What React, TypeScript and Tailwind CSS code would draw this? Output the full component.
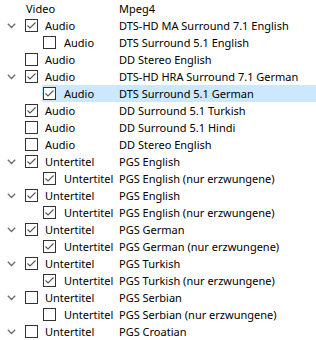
import React from "react";

type Row = {
  level: 0 | 1;
  chevron?: boolean;
  checked?: boolean;
  label: string;
  desc: string;
  selected?: boolean;
  header?: boolean;
};

const rows: Row[] = [
  { level: 0, header: true, label: "Video", desc: "Mpeg4" },
  { level: 0, chevron: true, checked: true, label: "Audio", desc: "DTS-HD MA Surround 7.1 English" },
  { level: 1, checked: false, label: "Audio", desc: "DTS Surround 5.1 English" },
  { level: 0, checked: false, label: "Audio", desc: "DD Stereo English" },
  { level: 0, chevron: true, checked: true, label: "Audio", desc: "DTS-HD HRA Surround 7.1 German" },
  { level: 1, checked: true, label: "Audio", desc: "DTS Surround 5.1 German", selected: true },
  { level: 0, checked: true, label: "Audio", desc: "DD Surround 5.1 Turkish" },
  { level: 0, checked: false, label: "Audio", desc: "DD Surround 5.1 Hindi" },
  { level: 0, checked: false, label: "Audio", desc: "DD Stereo English" },
  { level: 0, chevron: true, checked: true, label: "Untertitel", desc: "PGS English" },
  { level: 1, checked: true, label: "Untertitel", desc: "PGS English (nur erzwungene)" },
  { level: 0, chevron: true, checked: true, label: "Untertitel", desc: "PGS English" },
  { level: 1, checked: true, label: "Untertitel", desc: "PGS English (nur erzwungene)" },
  { level: 0, chevron: true, checked: true, label: "Untertitel", desc: "PGS German" },
  { level: 1, checked: true, label: "Untertitel", desc: "PGS German (nur erzwungene)" },
  { level: 0, chevron: true, checked: true, label: "Untertitel", desc: "PGS Turkish" },
  { level: 1, checked: true, label: "Untertitel", desc: "PGS Turkish (nur erzwungene)" },
  { level: 0, chevron: true, checked: false, label: "Untertitel", desc: "PGS Serbian" },
  { level: 1, checked: false, label: "Untertitel", desc: "PGS Serbian (nur erzwungene)" },
  { level: 0, chevron: true, checked: false, label: "Untertitel", desc: "PGS Croatian" },
];

function Chevron() {
  return (
    <svg width="9" height="6" viewBox="0 0 9 6" className="block">
      <path d="M0.8 0.8 L4.5 4.5 L8.2 0.8" fill="none" stroke="#6b6b6b" strokeWidth="1.3" />
    </svg>
  );
}

function Checkbox({ checked }: { checked?: boolean }) {
  return (
    <div className="w-[13px] h-[13px] border border-[#333333] bg-white flex items-center justify-center shrink-0">
      {checked && (
        <svg width="11" height="11" viewBox="0 0 11 11" className="block">
          <path d="M1.5 5.5 L4 8 L9.5 2.5" fill="none" stroke="#555555" strokeWidth="1.1" />
        </svg>
      )}
    </div>
  );
}

export default function App() {
  return (
    <div
      className="w-[316px] h-[340px] bg-white overflow-hidden text-[11px] text-black"
      style={{ fontFamily: '"Noto Sans", "Segoe UI", sans-serif' }}
    >
      {rows.map((r, i) => (
        <div key={i} className="flex h-[17px] items-center">
          {r.level === 0 ? (
            <div className="w-[25px] shrink-0 flex items-center pl-[7px]">
              {r.chevron && <Chevron />}
            </div>
          ) : (
            <div className="w-[42px] shrink-0" />
          )}
          <div
            className={
              "flex-1 h-full flex items-center " + (r.selected ? "bg-[#cce8ff]" : "")
            }
          >
            {r.level === 1 && <div className="w-[1px] shrink-0" />}
            {!r.header && <Checkbox checked={r.checked} />}
            <div
              className={
                "whitespace-nowrap leading-none " +
                (r.header ? "w-[94px] pl-[1px]" : r.level === 0 ? "pl-[7px] w-[81px]" : "pl-[8px] w-[63px]")
              }
            >
              {r.label}
            </div>
            <div className="whitespace-nowrap leading-none">{r.desc}</div>
          </div>
        </div>
      ))}
    </div>
  );
}
